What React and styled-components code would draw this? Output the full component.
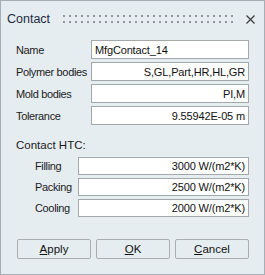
import React from "react";
import styled, { createGlobalStyle } from "styled-components";

const Global = createGlobalStyle`
  html, body { margin: 0; padding: 0; background: #e6edf1; }
  body { font-family: "Liberation Sans", Arial, sans-serif; }
`;

const Window = styled.div`
  box-sizing: border-box;
  width: 265px;
  height: 275px;
  border: 1px solid #a7afb4;
  background: #e6edf1;
  display: flex;
  flex-direction: column;
  color: #1b1b1b;
  font-size: 11px;
`;

const TitleBar = styled.div`
  display: flex;
  align-items: center;
  height: 36px;
  padding: 0 9px 0 6px;
  box-sizing: border-box;
`;

const Title = styled.div`
  font-size: 12.5px;
  color: #1c2b45;
  width: 56px;
`;

const Grip = styled.div`
  flex: 1;
  height: 8px;
  margin-right: 12px;
  background-image: radial-gradient(circle, #8f959a 0.9px, transparent 1.1px);
  background-size: 6px 6px;
  background-position: -2px -2px;
`;

const Close = styled.svg`
  width: 9px;
  height: 9px;
  display: block;
`;

const Body = styled.div`
  display: flex;
  flex-direction: column;
  padding: 3px 15px 0 15px;
`;

const Rows = styled.div`
  display: flex;
  flex-direction: column;
  gap: 3px;
`;

const Row = styled.div`
  display: flex;
  align-items: center;
  padding-left: ${(p) => p.$indent || 0}px;
`;

const Label = styled.div`
  width: ${(p) => p.$w}px;
  flex: none;
  white-space: nowrap;
  letter-spacing: -0.35px;
`;

const Field = styled.div`
  flex: 1;
  box-sizing: border-box;
  height: ${(p) => p.$h || 19}px;
  border: 1px solid #a3a8ab;
  background: #ffffff;
  display: flex;
  align-items: center;
  justify-content: ${(p) => (p.$left ? "flex-start" : "flex-end")};
  padding: 0 3px 0 3px;
  font-size: 11px;
  letter-spacing: -0.15px;
  color: #111;
  white-space: nowrap;
`;

const Section = styled.div`
  margin-top: 14px;
  margin-bottom: 6px;
  font-size: 11.5px;
`;

const Buttons = styled.div`
  display: flex;
  gap: 5px;
  margin-top: 22px;
  padding-left: 1px;
`;

const Button = styled.div`
  box-sizing: border-box;
  width: 74px;
  height: 20px;
  border: 1px solid #a9aeb1;
  border-radius: 2px;
  display: flex;
  align-items: center;
  justify-content: center;
  font-size: 11.5px;
  color: #111;
  u { text-decoration: underline; text-underline-offset: 1px; }
`;

export default function App() {
  return (
    <>
      <Global />
      <Window>
        <TitleBar>
          <Title>Contact</Title>
          <Grip />
          <Close viewBox="0 0 9 9">
            <path d="M0.5 0.5 L8.5 8.5 M8.5 0.5 L0.5 8.5" stroke="#3c3c3c" strokeWidth="1.2" />
          </Close>
        </TitleBar>
        <Body>
          <Rows>
            <Row>
              <Label $w={75}>Name</Label>
              <Field $left>MfgContact_14</Field>
            </Row>
            <Row>
              <Label $w={75}>Polymer bodies</Label>
              <Field>S,GL,Part,HR,HL,GR</Field>
            </Row>
            <Row>
              <Label $w={75}>Mold bodies</Label>
              <Field>PI,M</Field>
            </Row>
            <Row>
              <Label $w={75}>Tolerance</Label>
              <Field>9.55942E-05 m</Field>
            </Row>
          </Rows>
          <Section>Contact HTC:</Section>
          <Rows>
            <Row $indent={19}>
              <Label $w={43}>Filling</Label>
              <Field $h={18}>3000 W/(m2*K)</Field>
            </Row>
            <Row $indent={19}>
              <Label $w={43}>Packing</Label>
              <Field $h={18}>2500 W/(m2*K)</Field>
            </Row>
            <Row $indent={19}>
              <Label $w={43}>Cooling</Label>
              <Field $h={18}>2000 W/(m2*K)</Field>
            </Row>
          </Rows>
          <Buttons>
            <Button><u>A</u>pply</Button>
            <Button><u>O</u>K</Button>
            <Button><u>C</u>ancel</Button>
          </Buttons>
        </Body>
      </Window>
    </>
  );
}
